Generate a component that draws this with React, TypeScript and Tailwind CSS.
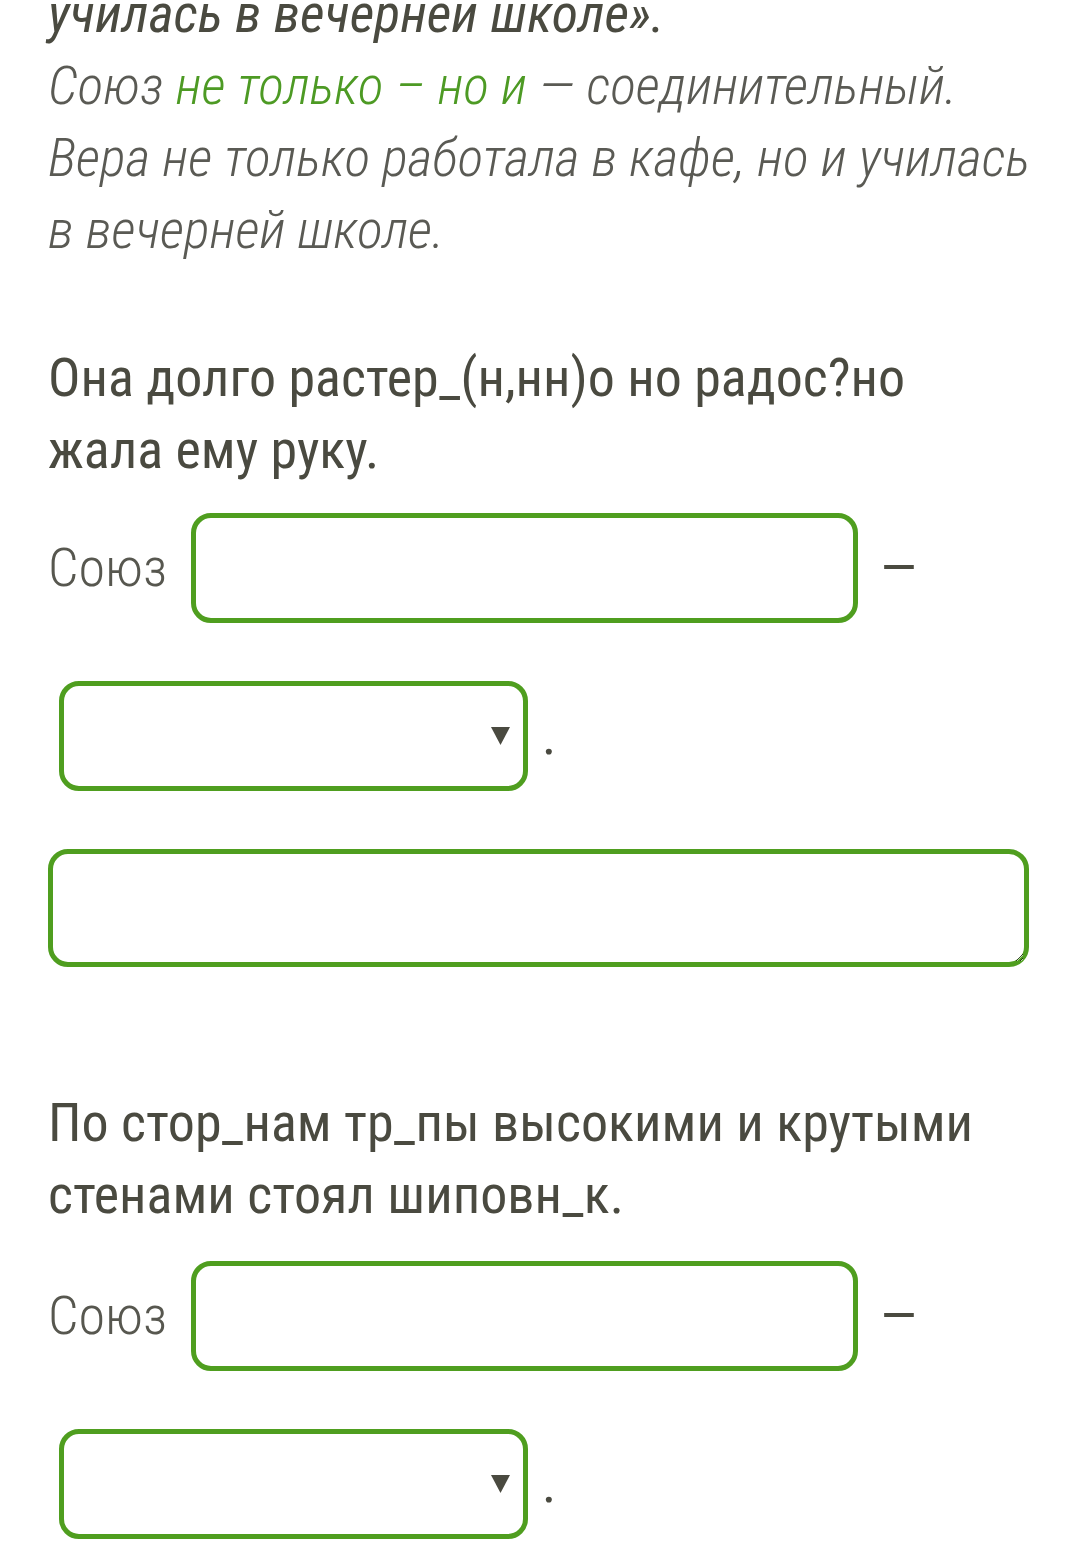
const font = "font-['Roboto_Condensed','Liberation_Sans_Narrow','Arial_Narrow',Roboto,sans-serif]"

function Select() {
  return (
    <div className="relative ml-[11px] h-[110px] w-[469px] rounded-[20px] border-[5px] border-[#4f9e1f] bg-white">
      <svg
        className="absolute right-[13px] top-1/2 -translate-y-1/2"
        width="19"
        height="18"
        viewBox="0 0 19 18"
      >
        <polygon points="0,0 19,0 9.5,18" fill="#4a4a40" />
      </svg>
    </div>
  )
}

function UnionRow() {
  return (
    <>
      <div className="flex items-center">
        <span className="font-light text-[#57574f]">Союз</span>
        <div className="ml-[24px] h-[110px] w-[667px] rounded-[20px] border-[5px] border-[#4f9e1f]" />
        <span className="ml-[22px] text-[#4a4a40]">—</span>
      </div>
      <div className="mt-[58px] flex items-center">
        <Select />
        <span className="ml-[14px] text-[#4a4a40]">.</span>
      </div>
    </>
  )
}

export default function App() {
  return (
    <div className={`h-[1554px] w-[1080px] overflow-hidden bg-white pl-[48px] pr-[46px] text-[54px] leading-[72px] ${font}`}>
      <div className="-mt-[22px] italic">
        <p className="font-normal text-[#4a4a40]">училась в вечерней школе».</p>
        <p className="font-light text-[#5a5a54]">
          Союз <span className="text-[#4d9a24]">не только – но и</span> — соединительный.
        </p>
        <p className="font-light text-[#5a5a54]">Вера не только работала в кафе, но и училась</p>
        <p className="font-light text-[#5a5a54]">в вечерней школе.</p>
      </div>

      <div className="mt-[76px] text-[#4a4a40]">
        <p>Она долго растер_(н,нн)о но радос?но</p>
        <p>жала ему руку.</p>
      </div>

      <div className="mt-[27px]">
        <UnionRow />
      </div>

      <textarea className="mt-[58px] block h-[118px] w-[981px] rounded-[20px] border-[5px] border-[#4f9e1f] bg-white outline-none" />

      <div className="mt-[120px] text-[#4a4a40]">
        <p>По стор_нам тр_пы высокими и крутыми</p>
        <p>стенами стоял шиповн_к.</p>
      </div>

      <div className="mt-[30px]">
        <UnionRow />
      </div>
    </div>
  )
}
